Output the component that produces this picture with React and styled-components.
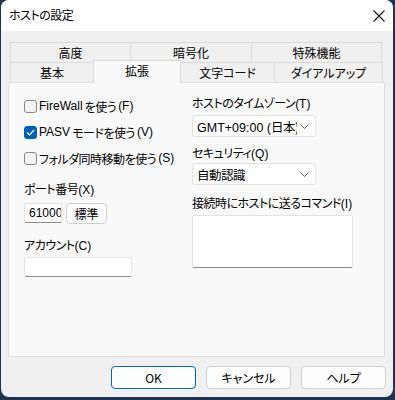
import React from 'react';
import styled, { createGlobalStyle } from 'styled-components';

const GlobalStyle = createGlobalStyle`
  html, body {
    margin: 0;
    padding: 0;
    background: #1d3350;
  }
  body {
    font-family: "Liberation Sans", "Noto Sans CJK JP", sans-serif;
    font-size: 12px;
    color: #000;
  }
`;

const Window = styled.div`
  margin-left: 1px;
  width: 392px;
  height: 397px;
  border-radius: 8px;
  overflow: hidden;
  background: #f0f0f0;
  display: flex;
  flex-direction: column;
`;

const TitleBar = styled.div`
  height: 31px;
  background: #ffffff;
  display: flex;
  align-items: center;
  justify-content: space-between;
  padding: 0 7px 0 8px;
  flex-shrink: 0;
`;

const Title = styled.span`
  font-size: 12px;
  line-height: 16px;
`;

const CloseButton = styled.div`
  width: 14px;
  height: 14px;
  display: flex;
  align-items: center;
  justify-content: center;
`;

const Body = styled.div`
  flex: 1;
  display: flex;
  flex-direction: column;
  padding: 11px 0 0 7px;
`;

const Tabs = styled.div`
  margin-left: 2px;
  display: flex;
  flex-direction: column;
`;

const TabRow = styled.div`
  display: flex;
  align-items: flex-end;
  height: 20px;
`;

const Tab = styled.div`
  width: ${({ w }) => w}px;
  height: ${({ active }) => (active ? 23 : 20)}px;
  margin-top: ${({ active }) => (active ? -3 : 0)}px;
  margin-bottom: ${({ active }) => (active ? -1 : 0)}px;
  margin-right: -1px;
  box-sizing: border-box;
  border: 1px solid #dadada;
  border-bottom: none;
  background: ${({ active }) => (active ? '#f9f9f9' : '#f0f0f0')};
  position: relative;
  z-index: ${({ active }) => (active ? 2 : 1)};
  display: flex;
  align-items: center;
  justify-content: center;
  font-family: "Noto Sans CJK JP", sans-serif;
  font-feature-settings: "palt";
  font-size: 12px;
  line-height: 16px;
  padding-bottom: ${({ active }) => (active ? 3 : 0)}px;
`;

const Panel = styled.div`
  width: 377px;
  height: 275px;
  box-sizing: border-box;
  border: 1px solid #dfdfdf;
  background: #f9f9f9;
  display: grid;
  grid-template-columns: 168px 1fr;
  padding: 10px 0 0 15px;
`;

const Column = styled.div`
  display: flex;
  flex-direction: column;
  margin-top: ${({ top }) => top || 0}px;
`;

const CheckRow = styled.label`
  display: flex;
  align-items: center;
  height: 26px;
  gap: 2px;
  white-space: nowrap;
`;

const Box = styled.span`
  width: 13px;
  height: 13px;
  box-sizing: border-box;
  border-radius: 3px;
  border: 1px solid ${({ checked }) => (checked ? '#005fb8' : '#868686')};
  background: ${({ checked }) => (checked ? '#005fb8' : '#f3f3f3')};
  display: flex;
  align-items: center;
  justify-content: center;
  flex-shrink: 0;
`;

const Label = styled.div`
  line-height: 16px;
  margin-top: ${({ top }) => top || 0}px;
  white-space: nowrap;
`;

const Jp = styled.span`
  font-family: "Noto Sans CJK JP", sans-serif;
  font-feature-settings: "palt";
  letter-spacing: -0.5px;
`;

const Row = styled.div`
  display: flex;
  gap: 4px;
  margin-top: ${({ top }) => top || 0}px;
`;

const Input = styled.div`
  width: ${({ w }) => w}px;
  height: 20px;
  box-sizing: border-box;
  background: #ffffff;
  border: 1px solid #e3e3e3;
  border-bottom-color: #8a8a8a;
  border-radius: 2px;
  margin-top: ${({ top }) => top || 0}px;
  display: flex;
  align-items: center;
  padding-left: 4px;
  overflow: hidden;
  white-space: nowrap;
  font-size: 12px;
`;

const SmallButton = styled.div`
  width: 41px;
  height: 21px;
  box-sizing: border-box;
  background: #fdfdfd;
  border: 1px solid #d0d0d0;
  border-radius: 4px;
  display: flex;
  align-items: center;
  justify-content: center;
  font-family: "Noto Sans CJK JP", sans-serif;
`;

const Select = styled.div`
  width: 124px;
  height: 22px;
  box-sizing: border-box;
  background: #ffffff;
  border: 1px solid #e3e3e3;
  border-radius: 3px;
  margin-top: ${({ top }) => top || 0}px;
  display: flex;
  align-items: center;
  padding: 0 6px 0 4px;
`;

const SelectText = styled.span`
  width: 100px;
  margin-right: 3px;
  overflow: hidden;
  white-space: nowrap;
  font-size: 12.5px;
`;

const TextArea = styled.div`
  width: 161px;
  height: 53px;
  box-sizing: border-box;
  background: #ffffff;
  border: 1px solid #e3e3e3;
  border-bottom-color: #8a8a8a;
  border-radius: 2px;
  margin-top: 3px;
`;

const Footer = styled.div`
  display: flex;
  justify-content: flex-end;
  gap: 10px;
  padding: 9px 7px 0 0;
`;

const Button = styled.div`
  width: 85px;
  height: 23px;
  box-sizing: border-box;
  background: #fdfdfd;
  border: 1px solid ${({ primary }) => (primary ? '#0067c0' : '#d0d0d0')};
  border-radius: 4px;
  display: flex;
  align-items: center;
  justify-content: center;
  font-family: "Noto Sans CJK JP", sans-serif;
  font-feature-settings: "palt";
  font-size: 12px;
`;

const Chevron = () => (
  <svg width="9" height="5" viewBox="0 0 9 5">
    <path d="M0.5 0.5 L4.5 4.5 L8.5 0.5" fill="none" stroke="#5f5f5f" strokeWidth="1" />
  </svg>
);

const Check = ({ checked, children }) => (
  <CheckRow>
    <Box checked={checked}>
      {checked && (
        <svg width="9" height="7" viewBox="0 0 9 7">
          <path d="M1 3.5 L3.5 6 L8 1" fill="none" stroke="#fff" strokeWidth="1.2" />
        </svg>
      )}
    </Box>
    {children}
  </CheckRow>
);

const App = () => (
  <>
    <GlobalStyle />
    <Window>
      <TitleBar>
        <Title>
          <Jp>ホストの設定</Jp>
        </Title>
        <CloseButton>
          <svg width="12" height="12" viewBox="0 0 12 12">
            <path d="M0.5 0.5 L11.5 11.5 M11.5 0.5 L0.5 11.5" stroke="#1a1a1a" strokeWidth="1.1" />
          </svg>
        </CloseButton>
      </TitleBar>
      <Body>
        <Tabs>
          <TabRow>
            <Tab w={121}>高度</Tab>
            <Tab w={122}>暗号化</Tab>
            <Tab w={131}>特殊機能</Tab>
          </TabRow>
          <TabRow>
            <Tab w={84}>基本</Tab>
            <Tab w={88} active>拡張</Tab>
            <Tab w={95}>文字コード</Tab>
            <Tab w={109}>ダイアルアップ</Tab>
          </TabRow>
        </Tabs>
        <Panel>
          <Column>
            <Check>
              FireWall<Jp>を使う</Jp>(F)
            </Check>
            <Check checked>
              PASV<Jp>モードを使う</Jp>(V)
            </Check>
            <Check>
              <Jp>フォルダ同時移動を使う</Jp>(S)
            </Check>
            <Label top={10}>
              <Jp>ポート番号</Jp>(X)
            </Label>
            <Row top={5}>
              <Input w={38}>61000</Input>
              <SmallButton>標準</SmallButton>
            </Row>
            <Label top={13}>
              <Jp>アカウント</Jp>(C)
            </Label>
            <Input w={108} top={3} />
          </Column>
          <Column top={2}>
            <Label>
              <Jp>ホストのタイムゾーン</Jp>(T)
            </Label>
            <Select top={3}>
              <SelectText>
                GMT+09:00 (<Jp>日本)</Jp>
              </SelectText>
              <Chevron />
            </Select>
            <Label top={8}>
              <Jp>セキュリティ</Jp>(Q)
            </Label>
            <Select top={1}>
              <SelectText>
                <Jp>自動認識</Jp>
              </SelectText>
              <Chevron />
            </Select>
            <Label top={10}>
              <Jp>接続時にホストに送るコマンド</Jp>(I)
            </Label>
            <TextArea />
          </Column>
        </Panel>
        <Footer>
          <Button primary>OK</Button>
          <Button>キャンセル</Button>
          <Button>ヘルプ</Button>
        </Footer>
      </Body>
    </Window>
  </>
);

export default App;
